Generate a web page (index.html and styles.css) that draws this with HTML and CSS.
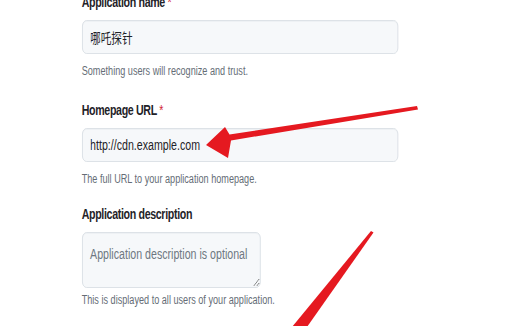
FILE: index.html
```html
<!DOCTYPE html>
<html lang="en">
<head>
<meta charset="utf-8">
<title>Register application</title>
<link rel="stylesheet" href="styles.css">
</head>
<body>
<form class="form">
  <div class="field field-name">
    <label class="label" for="name">Application name <span class="req">*</span></label>
    <input class="control" id="name" type="text" value="哪吒探针">
    <p class="note note-name">Something users will recognize and trust.</p>
  </div>
  <div class="field field-url">
    <label class="label" for="url">Homepage URL <span class="req">*</span></label>
    <input class="control" id="url" type="text" value="http://cdn.example.com">
    <p class="note note-url">The full URL to your application homepage.</p>
  </div>
  <div class="field field-desc">
    <label class="label" for="desc">Application description</label>
    <textarea class="control textarea" id="desc" placeholder="Application description is optional"></textarea>
    <p class="note note-desc">This is displayed to all users of your application.</p>
  </div>
</form>
<svg class="arrows" viewBox="0 0 523 326" width="523" height="326" aria-hidden="true">
  <polygon class="arrow" points="206,145 225,127 229.5,134.5 417,106 418,109.5 231,140.5 228,158"/>
  <polygon class="arrow" points="371,231 373.5,232.5 307,327 292,327"/>
</svg>
</body>
</html>
```

FILE: styles.css
```css
html {
  overflow: hidden;
  background: #ffffff;
}

body {
  margin: 0;
  width: 523px;
  height: 326px;
  display: flow-root;
  position: relative;
  background: #ffffff;
  font-family: "Liberation Sans", "Noto Sans CJK SC", sans-serif;
  color: #1f2328;
}

.form {
  margin-top: -8px;
  padding-left: 107.5px;
  transform: scaleX(0.76);
  transform-origin: 0 0;
}

.field-url {
  margin-top: 19.5px;
}

.field-desc {
  margin-top: 16px;
}

.label {
  display: block;
  font-size: 14px;
  font-weight: 700;
  line-height: 20px;
  letter-spacing: -0.45px;
  color: #1f2328;
  margin-bottom: 8px;
}

.req {
  color: #d1242f;
  font-weight: 400;
}

.control {
  display: block;
  box-sizing: border-box;
  width: 416px;
  height: 34px;
  margin: 0;
  padding: 0 10px;
  font-family: inherit;
  font-size: 14px;
  line-height: 20px;
  color: #1f2328;
  background: #f6f8fa;
  border: 1px solid #d8dee4;
  border-radius: 6px;
  box-shadow: inset 0 1px 0 rgba(208, 215, 222, 0.2);
  outline: none;
}

.textarea {
  width: 235.5px;
  height: 55.5px;
  padding: 11px 10px;
  resize: both;
}

.textarea::placeholder {
  color: #6e7781;
}

.note {
  margin: 8px 0 0;
  font-size: 12px;
  line-height: 18px;
  color: #656d76;
}

.note-url {
  margin-top: 8.5px;
}

.note-desc {
  margin-top: 3.5px;
}

.arrows {
  position: absolute;
  top: 0;
  left: 0;
  pointer-events: none;
}

.arrow {
  fill: #e51920;
}
```
